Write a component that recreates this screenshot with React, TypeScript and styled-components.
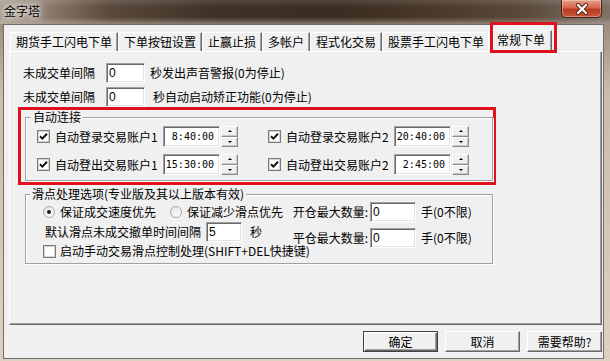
import React from 'react';
import styled, { createGlobalStyle, css } from 'styled-components';

const GlobalStyle = createGlobalStyle`
  html, body { margin: 0; padding: 0; background: #fff; }
  body {
    font-family: "Noto Sans CJK SC", "Liberation Sans", sans-serif;
    font-size: 12px;
    color: #000;
  }
  * { box-sizing: border-box; }
`;

const Window = styled.div`
  width: 610px;
  height: 361px;
  display: flex;
  flex-direction: column;
  overflow: hidden;
  background: linear-gradient(180deg, #8c7c6c 0%, #c9bcad 25%, #ddd1c3 100%);
`;

const TitleBar = styled.div`
  height: 24px;
  flex: none;
  display: flex;
  justify-content: space-between;
  align-items: flex-start;
  padding: 0 8px 0 4px;
  background:
    linear-gradient(180deg, rgba(255,255,255,0.12) 0%, rgba(0,0,0,0) 30%, rgba(0,0,0,0) 72%, rgba(190,178,165,0.55) 100%),
    linear-gradient(90deg, #ab9f92 0%, #8a7a6a 8%, #5a493c 18%, #3f3126 35%, #3a2c20 55%, #4b3a2c 72%, #5a4a3c 86%, #7d7168 100%);
`;

const Title = styled.span`
  margin-top: 3px;
  line-height: 16px;
  text-shadow: 0 0 4px #fff, 0 0 8px rgba(255,255,255,0.9), 0 0 14px rgba(255,255,255,0.7);
`;

const CloseButton = styled.div`
  width: 41px;
  height: 18px;
  border: 1px solid #4a2018;
  border-top: none;
  border-radius: 0 0 5px 5px;
  background: linear-gradient(180deg, #e8a08a 0%, #d4674c 45%, #b83a22 56%, #c9583a 100%);
  box-shadow: inset 0 0 0 1px rgba(255,255,255,0.3);
  display: flex;
  align-items: center;
  justify-content: center;
`;

const Client = styled.div`
  flex: 1;
  margin: 0 6px 2px 3px;
  border: 1px solid #6e6e6e;
  background: #f0f0f0;
  padding: 0 1px 0 5px;
  display: flex;
  flex-direction: column;
`;

const TabStrip = styled.div`
  height: 26px;
  flex: none;
  display: flex;
  align-items: flex-end;
  padding-left: 1px;
`;

const Tab = styled.div<{ $active?: boolean }>`
  position: relative;
  height: 19px;
  padding: 0 5px 0 5px;
  line-height: 17px;
  white-space: nowrap;
  background: #f0f0f0;
  border-top: 1px solid #fff;
  border-left: 1px solid #fff;
  border-right: 1px solid #696969;
  box-shadow: inset -1px 0 0 #a0a0a0;
  ${(p) =>
    p.$active &&
    css`
      z-index: 1;
      height: 22px;
      margin: 0 -1px -1px -2px;
      padding: 0 6px 0 8px;
      line-height: 18px;
      &::after {
        content: '';
        position: absolute;
        left: 1px;
        right: -6px;
        top: -9px;
        bottom: -1px;
        border: 3px solid #e0101c;
      }
    `}
`;

const Panel = styled.div`
  height: 274px;
  flex: none;
  border-top: 1px solid #fff;
  border-left: 1px solid #fff;
  border-right: 1px solid #696969;
  border-bottom: 1px solid #696969;
  box-shadow: inset -1px -1px 0 #a0a0a0;
  padding: 11px 0 0 13px;
  display: flex;
  flex-direction: column;
  align-items: flex-start;
`;

const IntervalRow = styled.div`
  display: flex;
  align-items: center;
  height: 20px;
  & + & { margin-top: 4px; }
`;

const Text = styled.span<{ $ml?: number }>`
  margin-left: ${(p) => p.$ml ?? 0}px;
  white-space: nowrap;
  line-height: 14px;
`;

const NumInput = styled.div<{ $w: number; $ml?: number }>`
  width: ${(p) => p.$w}px;
  height: 20px;
  flex: none;
  margin-left: ${(p) => p.$ml ?? 0}px;
  background: #fff;
  border: 1px solid;
  border-color: #a0a0a0 #fff #fff #a0a0a0;
  box-shadow: inset 1px 1px 0 #696969, inset -1px -1px 0 #e3e3e3;
  padding: 0 2px;
  font-family: "Liberation Sans", sans-serif;
  font-size: 12px;
  line-height: 18px;
`;

const Highlight = styled.div`
  margin-left: -5px;
  width: 478px;
  height: 78px;
  border: 3px solid #e0101c;
  padding-left: 4px;
`;

const GroupBox = styled.fieldset<{ $h: number; $pl: number; $mt?: number; $ml?: number }>`
  margin: ${(p) => p.$mt ?? 0}px 0 0 ${(p) => p.$ml ?? 0}px;
  padding: 0 0 0 ${(p) => p.$pl}px;
  min-width: 0;
  width: 468px;
  height: ${(p) => p.$h}px;
  border: 1px solid #a0a0a0;
  box-shadow: inset 1px 1px 0 #fff, 1px 1px 0 #fff;
`;

const Legend = styled.legend`
  padding: 0 2px;
  line-height: 14px;
  font-size: 12px;
  background: #f0f0f0;
`;

const AccountGrid = styled.div`
  display: grid;
  grid-template-columns: 231px 231px;
  row-gap: 7px;
  margin: 2px 0 0 6px;
`;

const AccountItem = styled.div`
  display: flex;
  align-items: center;
  height: 21px;
`;

const CheckBoxBox = styled.span`
  width: 13px;
  height: 13px;
  flex: none;
  border: 1px solid #7a7a7a;
  box-shadow: inset 0 0 0 1px #d4d4d4;
  background: #fff;
  display: inline-flex;
  align-items: center;
  justify-content: center;
`;

const AccountLabel = styled.span`
  width: 108px;
  margin-left: 5px;
  white-space: nowrap;
  line-height: 14px;
`;

const TimeBox = styled.div`
  width: 57px;
  height: 21px;
  background: #fff;
  border: 1px solid;
  border-color: #a0a0a0 #fff #fff #a0a0a0;
  box-shadow: inset 1px 1px 0 #696969, inset -1px -1px 0 #e3e3e3;
  padding-right: 5px;
  text-align: right;
  font-family: "DejaVu Sans Mono", "Liberation Mono", monospace;
  font-size: 10px;
  line-height: 19px;
`;

const Spinner = styled.div`
  width: 17px;
  height: 21px;
  margin-left: 1px;
  display: flex;
  flex-direction: column;
`;

const SpinBtn = styled.div`
  flex: 1;
  border: 1px solid;
  border-color: #fff #8a8a8a #8a8a8a #fff;
  box-shadow: inset -1px -1px 0 #c8c8c8;
  background: #f0f0f0;
  display: flex;
  align-items: center;
  justify-content: center;
`;

const Arrow = styled.span<{ $down?: boolean }>`
  width: 0;
  height: 0;
  border-left: 2px solid transparent;
  border-right: 2px solid transparent;
  ${(p) => (p.$down ? 'border-top: 2px solid #000;' : 'border-bottom: 2px solid #000;')}
`;

const SlipLayout = styled.div`
  display: flex;
  margin-top: 1px;
`;

const LeftCol = styled.div`
  width: 247px;
  margin-left: 13px;
  display: flex;
  flex-direction: column;
`;

const OptRow = styled.div<{ $h: number }>`
  display: flex;
  align-items: center;
  height: ${(p) => p.$h}px;
`;

const Radio = styled.span<{ $ml?: number }>`
  width: 12px;
  height: 12px;
  flex: none;
  margin-left: ${(p) => p.$ml ?? 0}px;
  border-radius: 50%;
  border: 1px solid #a8a8a8;
  background: linear-gradient(135deg, #e4e4e4, #fff);
  display: inline-flex;
  align-items: center;
  justify-content: center;
`;

const RadioDot = styled.span`
  width: 4px;
  height: 4px;
  border-radius: 50%;
  background: #1a1a1a;
`;

const RightCol = styled.div`
  display: flex;
  flex-direction: column;
  row-gap: 6px;
`;

const QtyRow = styled.div`
  display: flex;
  align-items: center;
  height: 20px;
`;

const QtyLabel = styled.span`
  width: 80px;
  text-align: right;
  padding-right: 2px;
  white-space: nowrap;
  line-height: 14px;
`;

const ButtonBar = styled.div`
  display: flex;
  justify-content: flex-end;
  gap: 7px;
  margin-top: 6px;
`;

const Button = styled.div<{ $default?: boolean }>`
  width: 75px;
  height: 21px;
  display: flex;
  align-items: center;
  justify-content: center;
  background: #f0f0f0;
  border: 1px solid;
  border-color: #fff #696969 #696969 #fff;
  box-shadow: inset -1px -1px 0 #a0a0a0;
  line-height: 14px;
  ${(p) =>
    p.$default &&
    css`
      border-color: #404040;
      box-shadow: inset 1px 1px 0 #fff, inset -1px -1px 0 #696969, inset -2px -2px 0 #a0a0a0;
    `}
`;

const Check = () => (
  <CheckBoxBox>
    <svg width="9" height="9" viewBox="0 0 9 9">
      <path d="M1 4.2 L3.4 6.6 L8 1.8" fill="none" stroke="#111" strokeWidth="2" />
    </svg>
  </CheckBoxBox>
);

const EmptyCheck = () => <CheckBoxBox />;

const TimeSpin = ({ value }: { value: string }) => (
  <>
    <TimeBox>{value}</TimeBox>
    <Spinner>
      <SpinBtn><Arrow /></SpinBtn>
      <SpinBtn><Arrow $down /></SpinBtn>
    </Spinner>
  </>
);

const tabs = ['期货手工闪电下单', '下单按钮设置', '止赢止损', '多帐户', '程式化交易', '股票手工闪电下单'];

const accounts = [
  { label: '自动登录交易账户1', time: '8:40:00' },
  { label: '自动登录交易账户2', time: '20:40:00' },
  { label: '自动登出交易账户1', time: '15:30:00' },
  { label: '自动登出交易账户2', time: '2:45:00' },
];

export default function App() {
  return (
    <>
      <GlobalStyle />
      <Window>
        <TitleBar>
          <Title>金字塔</Title>
          <CloseButton>
            <svg width="14" height="12" viewBox="0 0 14 12">
              <path d="M3 2 L11 10 M11 2 L3 10" stroke="#5a1a10" strokeWidth="4" strokeLinecap="round" />
              <path d="M3 2 L11 10 M11 2 L3 10" stroke="#fff" strokeWidth="2.4" strokeLinecap="round" />
            </svg>
          </CloseButton>
        </TitleBar>
        <Client>
          <TabStrip>
            {tabs.map((t) => (
              <Tab key={t}>{t}</Tab>
            ))}
            <Tab $active>常规下单</Tab>
          </TabStrip>
          <Panel>
            <IntervalRow>
              <Text>未成交单间隔</Text>
              <NumInput $w={39} $ml={11}>0</NumInput>
              <Text $ml={5}>秒发出声音警报(0为停止)</Text>
            </IntervalRow>
            <IntervalRow>
              <Text>未成交单间隔</Text>
              <NumInput $w={39} $ml={11}>0</NumInput>
              <Text $ml={8}>秒自动启动矫正功能(0为停止)</Text>
            </IntervalRow>
            <Highlight>
              <GroupBox $h={71} $pl={5}>
                <Legend>自动连接</Legend>
                <AccountGrid>
                  {accounts.map((a) => (
                    <AccountItem key={a.label}>
                      <Check />
                      <AccountLabel>{a.label}</AccountLabel>
                      <TimeSpin value={a.time} />
                    </AccountItem>
                  ))}
                </AccountGrid>
              </GroupBox>
            </Highlight>
            <GroupBox $h={77} $pl={4} $mt={2} $ml={2}>
              <Legend>滑点处理选项(专业版及其以上版本有效)</Legend>
              <SlipLayout>
                <LeftCol>
                  <OptRow $h={20}>
                    <Radio><RadioDot /></Radio>
                    <Text $ml={5}>保证成交速度优先</Text>
                    <Radio $ml={14} />
                    <Text $ml={5}>保证减少滑点优先</Text>
                  </OptRow>
                  <OptRow $h={20}>
                    <Text $ml={2}>默认滑点未成交撤单时间间隔</Text>
                    <NumInput $w={36} $ml={5}>5</NumInput>
                    <Text $ml={8}>秒</Text>
                  </OptRow>
                  <OptRow $h={18}>
                    <EmptyCheck />
                    <Text $ml={4}>启动手动交易滑点控制处理(SHIFT+DEL快捷键)</Text>
                  </OptRow>
                </LeftCol>
                <RightCol>
                  <QtyRow>
                    <QtyLabel>开仓最大数量:</QtyLabel>
                    <NumInput $w={46}>0</NumInput>
                    <Text $ml={5}>手(0不限)</Text>
                  </QtyRow>
                  <QtyRow>
                    <QtyLabel>平仓最大数量:</QtyLabel>
                    <NumInput $w={46}>0</NumInput>
                    <Text $ml={5}>手(0不限)</Text>
                  </QtyRow>
                </RightCol>
              </SlipLayout>
            </GroupBox>
          </Panel>
          <ButtonBar>
            <Button $default>确定</Button>
            <Button>取消</Button>
            <Button>需要帮助?</Button>
          </ButtonBar>
        </Client>
      </Window>
    </>
  );
}
